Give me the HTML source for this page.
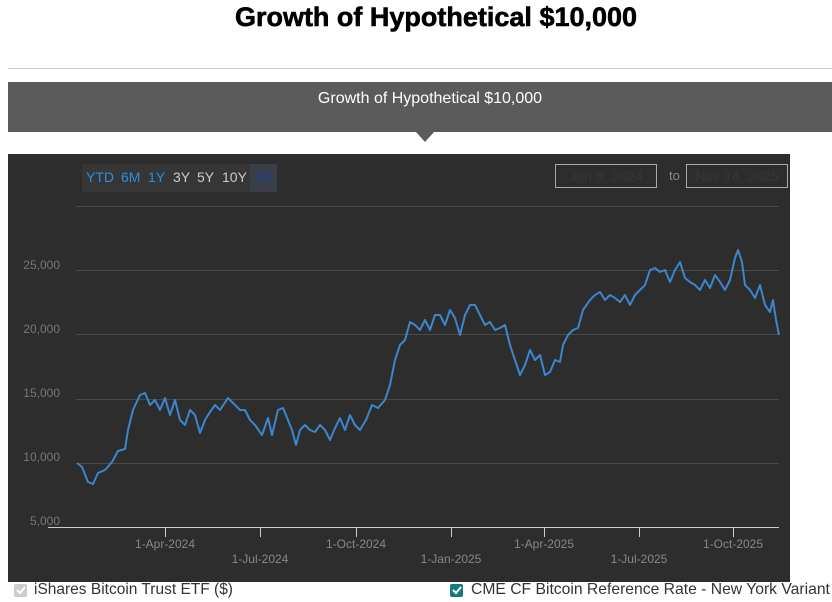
<!DOCTYPE html><html><head><style>
body{margin:0;width:832px;height:602px;background:#fff;font-family:"Liberation Sans",sans-serif;position:relative;overflow:hidden}
.a{position:absolute}
</style></head><body>
<div class="a" style="left:0;width:872px;top:2px;text-align:center;font-weight:900;font-size:27px;color:#000;-webkit-text-stroke:0.6px #000">Growth of Hypothetical $10,000</div>
<div class="a" style="left:8px;right:0;top:68px;height:1px;background:#ccc"></div>
<div class="a" style="left:8px;right:0;top:82px;height:50px;background:#5b5b5b;color:#fff;font-size:16px;text-align:center;line-height:34px"><span style="position:relative;left:10px">Growth of Hypothetical $10,000</span></div>
<div class="a" style="left:416px;top:132px;width:0;height:0;border-left:9px solid transparent;border-right:9px solid transparent;border-top:10px solid #5b5b5b"></div>
<div class="a" style="left:8px;top:154px;width:782px;height:428px;background:#2d2d2d"></div>
<div class="a" style="left:82px;top:164px;width:195px;height:28px;background:#363636"></div>
<div class="a" style="left:250px;top:164px;width:27px;height:28px;background:#3a3e48"></div>
<div class="a" style="left:86px;top:169px;font-size:14px;color:#2a8fe0">YTD</div>
<div class="a" style="left:121px;top:169px;font-size:14px;color:#2a8fe0">6M</div>
<div class="a" style="left:148px;top:169px;font-size:14px;color:#2a8fe0">1Y</div>
<div class="a" style="left:173px;top:169px;font-size:14px;color:#ccc">3Y</div>
<div class="a" style="left:197px;top:169px;font-size:14px;color:#ccc">5Y</div>
<div class="a" style="left:222px;top:169px;font-size:14px;color:#ccc">10Y</div>
<div class="a" style="left:255px;top:169px;font-size:14px;color:#1c3c96">All</div>
<div class="a" style="left:555px;top:164px;width:100px;height:22px;border:1px solid #aaa;color:#363636;font-size:14px;line-height:22px;text-align:center">Jan 8, 2024</div>
<div class="a" style="left:669px;top:168px;font-size:13px;color:#888">to</div>
<div class="a" style="left:686px;top:164px;width:100px;height:22px;border:1px solid #aaa;color:#363636;font-size:14px;line-height:22px;text-align:center">Nov 14, 2025</div>
<svg class="a" style="left:0;top:0" width="832" height="602">
<g stroke="#4a4a4a" stroke-width="1">
<line x1="76" x2="779" y1="206.5" y2="206.5"/><line x1="76" x2="779" y1="270.5" y2="270.5"/><line x1="76" x2="779" y1="334.5" y2="334.5"/><line x1="76" x2="779" y1="399.5" y2="399.5"/><line x1="76" x2="779" y1="463.5" y2="463.5"/></g>
<line x1="48" x2="779" y1="527.5" y2="527.5" stroke="#ccc"/>
<g stroke="#ccc"><line x1="165.5" x2="165.5" y1="527" y2="537"/><line x1="260.5" x2="260.5" y1="527" y2="537"/><line x1="356.5" x2="356.5" y1="527" y2="537"/><line x1="451.5" x2="451.5" y1="527" y2="537"/><line x1="544.5" x2="544.5" y1="527" y2="537"/><line x1="639.5" x2="639.5" y1="527" y2="537"/><line x1="733.5" x2="733.5" y1="527" y2="537"/></g>
<g fill="#777" font-size="12" font-family="Liberation Sans" text-anchor="end">
<text x="60" y="269">25,000</text><text x="60" y="333">20,000</text><text x="60" y="397">15,000</text><text x="60" y="461">10,000</text><text x="60" y="525">5,000</text></g>
<g fill="#888" font-size="12" font-family="Liberation Sans" text-anchor="middle">
<text x="165" y="548">1-Apr-2024</text><text x="260" y="563">1-Jul-2024</text><text x="356" y="548">1-Oct-2024</text><text x="451" y="563">1-Jan-2025</text><text x="544" y="548">1-Apr-2025</text><text x="639" y="563">1-Jul-2025</text><text x="733" y="548">1-Oct-2025</text></g>
<polyline fill="none" stroke="#3b86cc" stroke-width="2" stroke-linejoin="round" points="77,463 82,467 88,482 93,484 98,473 105,470 112,462 118,451 125,449 128,430 133,410 140,395 145,393 150,405 155,400 160,410 165,398 170,415 175,400 180,420 185,425 190,410 195,415 200,433 205,420 210,412 215,405 220,410 228,398 235,405 240,410 245,410 250,420 255,425 262,435 268,418 272,435 278,410 283,408 288,420 292,430 296,445 300,430 305,425 310,430 315,432 320,425 325,430 330,440 335,428 340,418 345,430 350,415 355,425 360,430 366,420 372,405 378,408 385,400 390,385 395,360 400,345 405,340 410,322 415,325 420,330 425,320 430,330 435,315 440,315 445,325 450,310 455,318 460,335 465,315 470,305 475,305 480,315 485,325 490,322 495,330 500,328 505,325 510,345 515,360 520,375 525,365 530,350 535,360 540,355 545,375 550,372 555,360 560,362 563,345 568,335 573,330 578,328 583,310 590,300 595,295 600,292 605,300 610,295 615,298 620,302 625,295 630,305 635,295 640,290 645,285 650,270 655,268 660,272 665,270 670,282 675,270 680,262 685,278 690,282 695,285 700,290 705,280 710,288 715,275 720,282 725,290 730,280 735,258 738,250 742,262 745,285 750,290 755,298 760,285 765,305 770,312 773,300 776,320 779,335"/>
<rect x="14" y="584" width="13" height="13" rx="2" fill="#ccc"/>
<path d="M17 590 l3 3 l5 -6" fill="none" stroke="#fff" stroke-width="2"/>
<rect x="450" y="584" width="13" height="13" rx="2" fill="#137a7f"/>
<path d="M453 590 l3 3 l5 -6" fill="none" stroke="#fff" stroke-width="2"/>
</svg>
<div class="a" style="left:34px;top:581px;font-size:15.5px;color:#333">iShares Bitcoin Trust ETF ($)</div>
<div class="a" style="left:471px;top:581px;font-size:15.7px;color:#333">CME CF Bitcoin Reference Rate - New York Variant</div>
</body></html>
